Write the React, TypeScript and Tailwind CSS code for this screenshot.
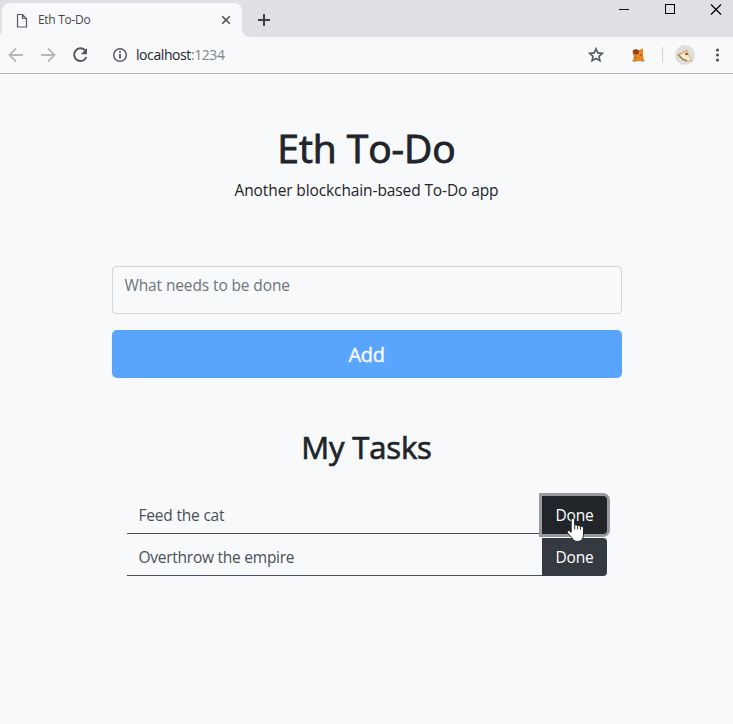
import React from "react";

const tasks = [
  { title: "Feed the cat", focused: true, spacing: "tracking-[-0.2px]" },
  { title: "Overthrow the empire", focused: false, spacing: "tracking-[-0.25px]" },
];

function TabStrip() {
  return (
    <div className="flex h-[37px] justify-between bg-[#dee0e6]">
      <div className="flex items-end">
        <svg width="2" height="8" viewBox="0 0 2 8" fill="#f8f9fb">
          <path d="M2 0v8H0V6.500C1.300 5 2 2.500 2 0z" />
        </svg>
        <div className="flex h-[34px] w-60 items-center rounded-t-lg bg-[#f8f9fb] pl-[14px] pr-[11px]">
          <svg width="12" height="15" viewBox="0 0 12 15" fill="none" stroke="#55585c" strokeWidth="1.2">
            <path d="M1.500 1.500h5l4 4v8.500h-9zM6.500 1.500v4h4" />
          </svg>
          <span className="ml-[10px] grow text-[12px] leading-4 tracking-[-0.3px] text-[#45484c]">Eth To-Do</span>
          <svg width="10" height="10" viewBox="0 0 10 10" stroke="#4e5256" strokeWidth="1.6">
            <path d="M1.200 1.200l7.600 7.600M8.800 1.200L1.200 8.800" />
          </svg>
        </div>
        <svg width="8" height="8" viewBox="0 0 8 8" fill="#f8f9fb">
          <path d="M0 0a8 8 0 0 0 8 8H0z" />
        </svg>
        <svg className="mb-[11px] ml-2" width="12" height="12" viewBox="0 0 12 12" stroke="#3c4043" strokeWidth="2">
          <path d="M6 0v12M0 6h12" />
        </svg>
      </div>
      <div className="flex pt-1">
        <svg width="120" height="12" viewBox="0 0 120 12" fill="none" stroke="#000" shapeRendering="crispEdges">
          <path d="M6 5.500h10M52.500 .500h9v9h-9z" />
          <path d="M98 .5l10 10M108 .5l-10 10" shapeRendering="auto" strokeWidth="1.2" />
        </svg>
      </div>
    </div>
  );
}

function Toolbar() {
  return (
    <div className="flex h-[37px] items-center border-b border-[#b4b5b9] bg-[#f8f9fb] pl-2">
      <svg width="120" height="16" viewBox="0 0 120 16" fill="none" strokeWidth="1.8">
        <path d="M15 8H2M8 1.500L1.500 8 8 14.500" stroke="#b5b7ba" />
        <path d="M33 8h13M40 1.500L46.500 8 40 14.500" stroke="#b5b7ba" />
        <path d="M77 3.300A6.300 6.300 0 1 0 78.300 10" stroke="#55585d" strokeWidth="2" />
        <path d="M79 1v6.200h-6.200z" fill="#55585d" />
        <circle cx="112" cy="8" r="6.300" stroke="#55585d" strokeWidth="1.500" />
        <path d="M112 7v4.500M112 4v1.800" stroke="#55585d" strokeWidth="1.800" />
      </svg>
      <span className="ml-2 grow text-[14px] leading-5 tracking-[-0.42px] text-[#24272b]">
        localhost<span className="text-[#80858a]">:1234</span>
      </span>
      <svg width="145" height="24" viewBox="0 0 145 24">
        <path d="M8 5.800l1.850 4.100 4.450.450-3.350 3 1 4.400L8 15.450l-3.950 2.300 1-4.400-3.350-3 4.450-.450z" fill="none" stroke="#555b64" strokeWidth="1.600" />
        <path d="M45 7h6l4-1.500v6l.500 4 1 2.500H44.500l1.500-4-1.500-3.500z" fill="#ee8420" />
        <path d="M45 7l3.500-1L51 8l-.500 3-3 .500-2.500-2z" fill="#84431d" />
        <path d="M46.500 14h1.500v1h-1.500zM52 11.500h1.500v1H52z" fill="#75401d" />
        <path d="M44.500 17.500h5v1h-5zM53 17.500h3v1h-3z" fill="#aa8162" />
        <path d="M74.500 4v16" stroke="#cdd0d5" />
        <circle cx="97" cy="12" r="10" fill="#dedede" />
        <path d="M90 11L98.500 6.500 104 18 98 17z" fill="#f8edcf" />
        <path d="M90 11l8.500-4.500 1.500 1-7 4.500z" fill="#d8b77c" />
        <path d="M90 11.500l5 5 4 1.300" fill="none" stroke="#b87b3c" strokeWidth="1.600" />
        <path d="M98.500 7l5.300 11-5-.500" fill="none" stroke="#caa574" strokeWidth=".8" />
        <circle cx="98.500" cy="11" r="1.300" fill="#bd2c20" />
        <g fill="#4e5156">
          <circle cx="129.500" cy="7" r="1.600" />
          <circle cx="129.500" cy="12" r="1.600" />
          <circle cx="129.500" cy="17" r="1.600" />
        </g>
      </svg>
    </div>
  );
}

function HandCursor() {
  return (
    <svg className="absolute left-[24px] top-[21px]" width="20" height="26" viewBox="0 0 20 26">
      <path
        d="M6.900 1.500c1 0 1.700.700 1.700 1.700v4.900c1-.500 2.200-.200 2.700.600 1-.500 2.200-.200 2.700.700 1.700-.600 3.500.300 3.500 2.100v5.500c0 4.500-2 7.500-6 7.500-3.200 0-4.700-1.700-6-4.200L1.400 15.800c-.700-1.600.900-2.800 2.300-1.800l1.500 1.300V3.200c0-1 .700-1.700 1.700-1.700z"
        fill="#fff"
        stroke="#202326"
        strokeWidth="1"
      />
      <path d="M8.700 8v4.500M11.600 8.800v3.700M14.500 9.800v3" stroke="#202326" strokeWidth=".9" />
    </svg>
  );
}

export default function App() {
  return (
    <div className="h-[724px] w-[733px] overflow-hidden bg-[#f8f9fb] font-['Open_Sans','Noto_Sans',sans-serif] text-[#212529]">
      <TabStrip />
      <Toolbar />
      <main className="mx-auto flex w-[510px] flex-col pt-[50px]">
        <h1 className="text-center text-[39px] font-medium leading-[48px] tracking-[-0.05px] [-webkit-text-stroke:0.9px_#212529]">Eth To-Do</h1>
        <p className="mt-[6px] text-center text-[15.5px] leading-6 tracking-[-0.11px]">Another blockchain-based To-Do app</p>
        <textarea
          className="mt-[64px] h-12 resize-none overflow-hidden rounded border border-[#ced4da] bg-transparent px-3 py-[6px] text-[15.5px] leading-6 tracking-[-0.12px] outline-none placeholder:text-[#6c757d]"
          placeholder="What needs to be done"
        />
        <button className="mt-4 h-12 rounded-[5px] bg-[#59a5fd] pt-px text-xl font-medium leading-[30px] tracking-[-0.3px] text-[#f8f9fa] [-webkit-text-stroke:0.4px_#f8f9fa]">Add</button>
        <h2 className="mt-[50px] text-center text-[31px] font-medium leading-[38px] tracking-[-0.15px] [-webkit-text-stroke:0.7px_#212529]">My Tasks</h2>
        <div className="mx-[15px] mt-[30px] flex flex-col gap-1">
          {tasks.map((task) => (
            <div key={task.title} className="flex h-[38px]">
              <div className={"flex grow items-center border-b border-[#495057] pl-3 pt-px text-[15.5px] leading-6 text-[#495057] " + task.spacing}>{task.title}</div>
              <button
                className={
                  "relative w-[65px] rounded-r pl-px text-[15.5px] leading-6 tracking-[-0.2px] text-white " +
                  (task.focused ? "z-10 bg-[#212529] shadow-[0_0_0_3px_#989a9d]" : "bg-[#343a40]")
                }
              >
                Done
                {task.focused && <HandCursor />}
              </button>
            </div>
          ))}
        </div>
      </main>
    </div>
  );
}
